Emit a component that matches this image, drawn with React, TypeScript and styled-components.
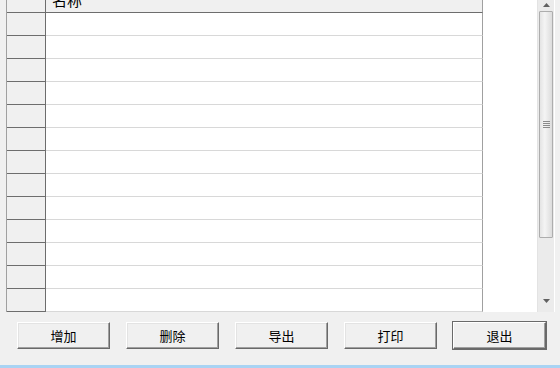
import React from "react";
import styled, { createGlobalStyle } from "styled-components";

const GlobalStyle = createGlobalStyle`
  html, body {
    margin: 0;
    padding: 0;
    background: #f0f0f0;
  }
  body {
    font-family: "Noto Sans CJK SC", "Liberation Sans", sans-serif;
    font-size: 12px;
    color: #000;
  }
`;

const Window = styled.div`
  width: 560px;
  height: 368px;
  overflow: hidden;
  background: #f0f0f0;
  display: flex;
  flex-direction: column;
  box-sizing: border-box;
  border-bottom: 3px solid #a9d3f3;
`;

const GridBox = styled.div`
  margin: -10px 5px 0 6px;
  height: 322px;
  display: flex;
  background: #fff;
  border-left: 1px solid #a0a0a0;
  box-sizing: border-box;
`;

const Table = styled.div`
  width: 476px;
  display: flex;
  flex-direction: column;
`;

const Row = styled.div`
  display: flex;
  height: 23px;
  box-sizing: border-box;
`;

const RowHead = styled.div`
  width: 39px;
  box-sizing: border-box;
  background: #f0f0f0;
  border-right: 1px solid #6d6d6d;
  border-bottom: 1px solid #6d6d6d;
`;

const Cell = styled.div<{ $header?: boolean }>`
  flex: 1;
  box-sizing: border-box;
  background: ${(p) => (p.$header ? "#f0f0f0" : "#fff")};
  border-right: 1px solid #a0a0a0;
  border-bottom: 1px solid ${(p) => (p.$header ? "#6d6d6d" : "#d8d8d8")};
  padding-left: 6px;
  font-size: 15px;
  line-height: 19px;
  white-space: nowrap;
  overflow: hidden;
`;

const Blank = styled.div`
  flex: 1;
  background: #fff;
`;

const ScrollBar = styled.div`
  width: 17px;
  margin: 10px 1px 0 0;
  display: flex;
  flex-direction: column;
  background: #ebebeb;
  border-left: 1px solid #e3e3e3;
  box-sizing: border-box;
`;

const Arrow = styled.div`
  height: 10px;
  display: flex;
  align-items: center;
  justify-content: center;
  flex-shrink: 0;
`;

const Thumb = styled.div`
  margin: 1px 1px 0 1px;
  height: 227px;
  box-sizing: border-box;
  border: 1px solid #adadad;
  border-radius: 1px;
  background: linear-gradient(to right, #e4e4e4, #f4f4f4 40%, #dcdcdc);
  display: flex;
  align-items: center;
  justify-content: center;
`;

const Track = styled.div<{ $fixed?: number }>`
  flex: ${(p) => (p.$fixed ? `0 0 ${p.$fixed}px` : "1")};
`;

const ButtonBar = styled.div`
  display: flex;
  gap: 16px;
  padding: 10px 0 0 17px;
`;

const Button = styled.button<{ $default?: boolean }>`
  width: 93px;
  height: 27px;
  padding: 0;
  font-family: "Noto Sans CJK SC", "Liberation Sans", sans-serif;
  font-size: 13px;
  color: #000;
  background: #f0f0f0;
  box-sizing: border-box;
  border: 1px solid;
  border-color: #ffffff #696969 #696969 #ffffff;
  box-shadow: ${(p) =>
    p.$default
      ? "0 0 0 1px #6a6a6a, inset -1px -1px 0 #a0a0a0"
      : "inset -1px -1px 0 #a0a0a0, inset 1px 1px 0 #e3e3e3"};
`;

const rows = Array.from({ length: 13 }, (_, i) => i);
const buttons = ["增加", "删除", "导出", "打印", "退出"];

function App() {
  return (
    <Window>
      <GlobalStyle />
      <GridBox>
        <Table>
          <Row>
            <RowHead />
            <Cell $header>名称</Cell>
          </Row>
          {rows.map((r) => (
            <Row key={r}>
              <RowHead />
              <Cell />
            </Row>
          ))}
        </Table>
        <Blank />
        <ScrollBar>
          <Arrow>
            <svg width="7" height="4" viewBox="0 0 7 4">
              <path d="M0 4 L3.5 0 L7 4 Z" fill="#606060" />
            </svg>
          </Arrow>
          <Thumb>
            <svg width="7" height="7" viewBox="0 0 7 7">
              <path d="M0 0.5h7M0 2.5h7M0 4.5h7M0 6.5h7" stroke="#8a8a8a" strokeWidth="1" />
            </svg>
          </Thumb>
          <Track />
          <Arrow>
            <svg width="7" height="4" viewBox="0 0 7 4">
              <path d="M0 0 L7 0 L3.5 4 Z" fill="#606060" />
            </svg>
          </Arrow>
          <Track $fixed={6} />
        </ScrollBar>
      </GridBox>
      <ButtonBar>
        {buttons.map((b) => (
          <Button key={b} $default={b === "退出"}>
            {b}
          </Button>
        ))}
      </ButtonBar>
    </Window>
  );
}

export default App;
